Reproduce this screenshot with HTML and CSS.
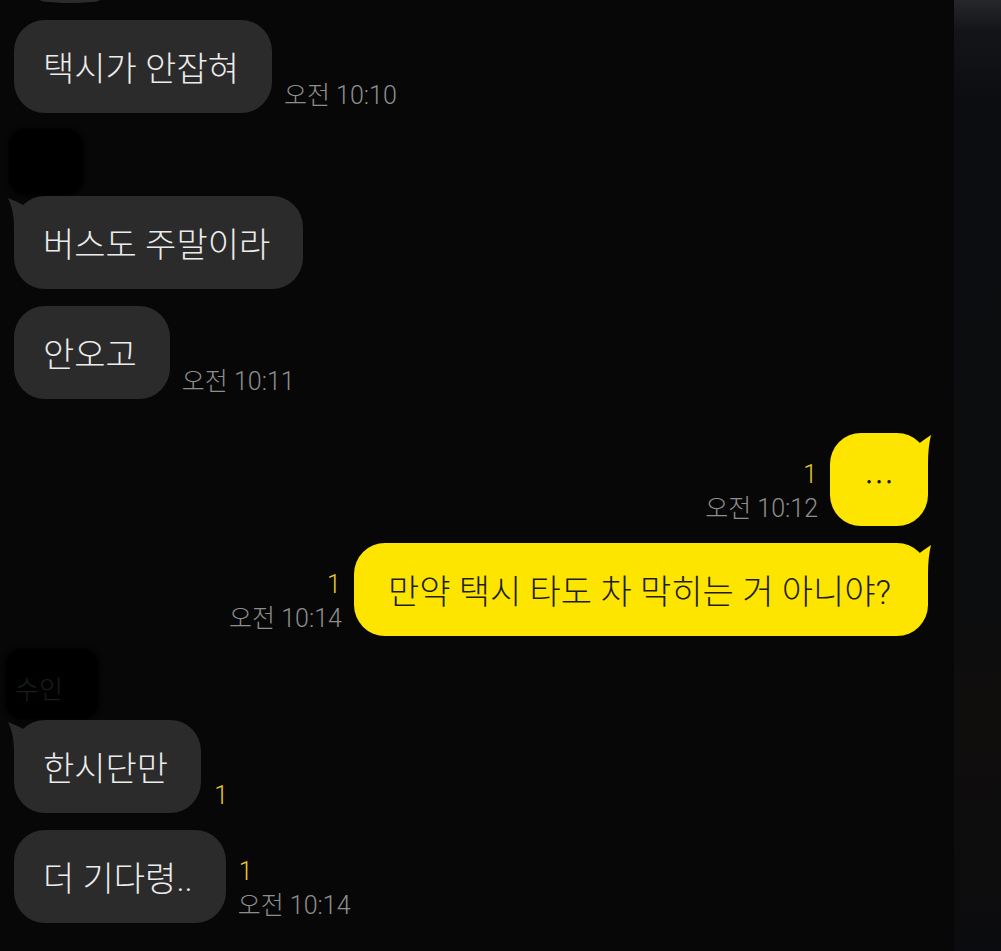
FILE: index.html
```html
<!DOCTYPE html>
<html lang="ko">
<head>
<meta charset="utf-8">
<title>채팅</title>
<link rel="stylesheet" href="styles.css">
</head>
<body>
<div class="screen">
  <main class="chat">
    <div class="prev-bubble"></div>

    <div class="row recv">
      <div class="bubble gray">택시가 안잡혀</div>
      <div class="meta"><span class="time">오전 10:10</span></div>
    </div>

    <div class="group">
      <div class="sender sender-a"><div class="blob blob-a"></div></div>
      <div class="row recv">
        <div class="bubble gray tailed">
          <svg class="tail tail-left" width="24" height="32" viewBox="0 0 24 32"><path d="M2,2 Q10,5 19,10 L12,31 L8,31 Q8,14 2,2 Z"/></svg>
          버스도 주말이라
        </div>
      </div>
    </div>

    <div class="row recv">
      <div class="bubble gray">안오고</div>
      <div class="meta"><span class="time">오전 10:11</span></div>
    </div>

    <div class="row sent turn">
      <div class="meta"><span class="unread">1</span><span class="time">오전 10:12</span></div>
      <div class="bubble yellow dots tailed">
        <svg class="tail tail-right" width="24" height="32" viewBox="0 0 24 32"><path d="M19,2 Q13,6 5,12 L10,31 L16,31 Q16,14 19,2 Z"/></svg>
        <span class="ellipsis">…</span>
      </div>
    </div>

    <div class="row sent">
      <div class="meta"><span class="unread">1</span><span class="time">오전 10:14</span></div>
      <div class="bubble yellow tailed">
        <svg class="tail tail-right" width="24" height="32" viewBox="0 0 24 32"><path d="M19,2 Q13,6 5,12 L10,31 L16,31 Q16,14 19,2 Z"/></svg>
        만약 택시 타도 차 막히는 거 아니야?
      </div>
    </div>

    <div class="group">
      <div class="sender sender-b"><div class="blob blob-b"><span class="name">수인</span></div></div>
      <div class="row recv">
        <div class="bubble gray tailed">
          <svg class="tail tail-left" width="24" height="32" viewBox="0 0 24 32"><path d="M2,2 Q10,5 19,10 L12,31 L8,31 Q8,14 2,2 Z"/></svg>
          한시단만
        </div>
        <div class="meta"><span class="unread">1</span></div>
      </div>
    </div>

    <div class="row recv">
      <div class="bubble gray">더 기다령..</div>
      <div class="meta"><span class="unread">1</span><span class="time">오전 10:14</span></div>
    </div>
  </main>
  <aside class="edge"></aside>
</div>
</body>
</html>
```

FILE: styles.css
```css
html, body {
  margin: 0;
  padding: 0;
  background: #070707;
}

body {
  font-family: Roboto, "Noto Sans CJK KR", "Noto Sans", sans-serif;
  font-weight: 300;
}

.screen {
  display: flex;
  width: 1001px;
  height: 951px;
  overflow: hidden;
}

.chat {
  flex: 1;
  display: flex;
  flex-direction: column;
  gap: 17px;
  padding: 0 26px 0 14px;
  background: #070707;
}

.edge {
  width: 47px;
  flex: none;
  background:
    linear-gradient(to bottom, #25272b 0, #131519 30px, #0b0d10 100px, rgba(11,13,16,0) 180px),
    linear-gradient(to bottom, #0b0d10 0, #0c0d0f 600px, #100e0d 700px, #0d0c0d 880px, #0b0c0f 951px);
}

.prev-bubble {
  width: 60px;
  height: 3px;
  margin-left: 26px;
  background: #2b2b2b;
  border-radius: 0 0 30px 30px / 0 0 3px 3px;
}

.row {
  display: flex;
  align-items: flex-end;
  gap: 12px;
}

.row.sent {
  justify-content: flex-end;
  gap: 12px;
}

.row.turn {
  margin-top: 17px;
}

.group {
  display: flex;
  flex-direction: column;
}

.sender {
  display: flex;
  align-items: flex-start;
}

.sender-a {
  height: 66px;
}

.sender-b {
  height: 70px;
  margin-top: -3px;
}

.blob {
  background: #000;
  border-radius: 16px;
  box-shadow: 0 0 4px 2px #000;
}

.blob-a {
  width: 72px;
  height: 64px;
  margin-left: -4px;
}

.blob-b {
  width: 90px;
  height: 68px;
  margin-left: -7px;
  display: flex;
  align-items: center;
  padding-left: 8px;
  box-sizing: border-box;
}

.name {
  font-size: 26px;
  color: #15221a;
  margin-top: 6px;
}

.bubble {
  position: relative;
  height: 93px;
  display: flex;
  align-items: center;
  box-sizing: border-box;
  padding: 0 33px 0 29px;
  border-radius: 31px;
  font-size: 34px;
  white-space: nowrap;
}

.bubble.gray {
  background: #2b2b2b;
  color: #ececec;
}

.bubble.yellow {
  background: #fee500;
  color: #1d1d1d;
  padding: 0 37px 0 34px;
}

.bubble.dots {
  width: 98px;
  padding: 0;
  justify-content: center;
}

.ellipsis {
  font-family: "Noto Sans CJK KR", sans-serif;
  font-size: 30px;
}

.tail {
  position: absolute;
  top: 0;
}

.tail-left {
  left: -8px;
  fill: #2b2b2b;
}

.tail-right {
  right: -8px;
  fill: #fee500;
}

.meta {
  display: flex;
  flex-direction: column;
  padding-bottom: 0;
  line-height: 34px;
  font-size: 25px;
}

.recv .meta {
  align-items: flex-start;
}

.sent .meta {
  align-items: flex-end;
}

.time {
  color: #8e8e8e;
  white-space: nowrap;
}

.unread {
  color: #e6c92a;
  padding: 0 1px;
}
```
